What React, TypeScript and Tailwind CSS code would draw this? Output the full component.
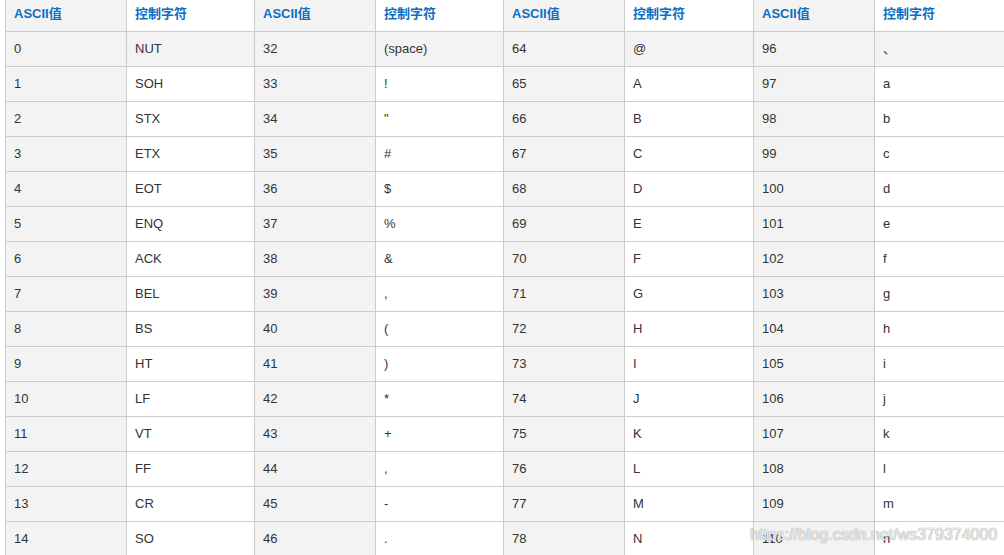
import React from "react";

type Row = [string, string, string, string, string, string, string, string];

const ctrl = ["NUT", "SOH", "STX", "ETX", "EOT", "ENQ", "ACK", "BEL", "BS", "HT", "LF", "VT", "FF", "CR", "SO"];
const punct = ["(space)", "!", "\"", "#", "$", "%", "&", ",", "(", ")", "*", "+", ",", "-", "."];
const upper = ["@", "A", "B", "C", "D", "E", "F", "G", "H", "I", "J", "K", "L", "M", "N"];
const lower = ["、", "a", "b", "c", "d", "e", "f", "g", "h", "i", "j", "k", "l", "m", "n"];

const rows: Row[] = ctrl.map((c, i) => [
  String(i),
  c,
  String(32 + i),
  punct[i],
  String(64 + i),
  upper[i],
  String(96 + i),
  lower[i],
]);

const header = ["ASCII值", "控制字符", "ASCII值", "控制字符", "ASCII值", "控制字符", "ASCII值", "控制字符"];

const Cell = ({ text, gray, head }: { text: string; gray: boolean; head?: boolean }) => (
  <div
    className={`flex h-[35px] items-center border-b border-l border-[#cccccc] pl-[8px] whitespace-nowrap ${
      gray ? "bg-[#f3f3f3]" : "bg-white"
    } ${head ? "font-bold text-[#0b6fc3]" : "text-[#333333]"}`}
  >
    {text}
  </div>
);

export default function App() {
  return (
    <div className="relative h-[555px] w-[1004px] overflow-hidden bg-white font-['Liberation_Sans','Noto_Sans_CJK_SC',sans-serif] text-[13px]">
      <div className="ml-[5px] mt-[-3px] grid w-[1010px] grid-cols-[121px_128px_121px_128px_121px_129px_121px_141px]">
        {header.map((h, i) => (
          <Cell key={`h${i}`} text={h} gray={i % 2 === 0} head />
        ))}
        {rows.map((r, ri) =>
          r.map((t, ci) => <Cell key={`${ri}-${ci}`} text={t} gray={ri === 0 || ci % 2 === 0} />)
        )}
      </div>
      <div className="absolute left-[750px] top-[527px] text-[16px] leading-none text-white/80 [text-shadow:0_0_1px_#9a9a9a,0_0_1px_#9a9a9a]">
        https://blog.csdn.net/ws379374000
      </div>
    </div>
  );
}
